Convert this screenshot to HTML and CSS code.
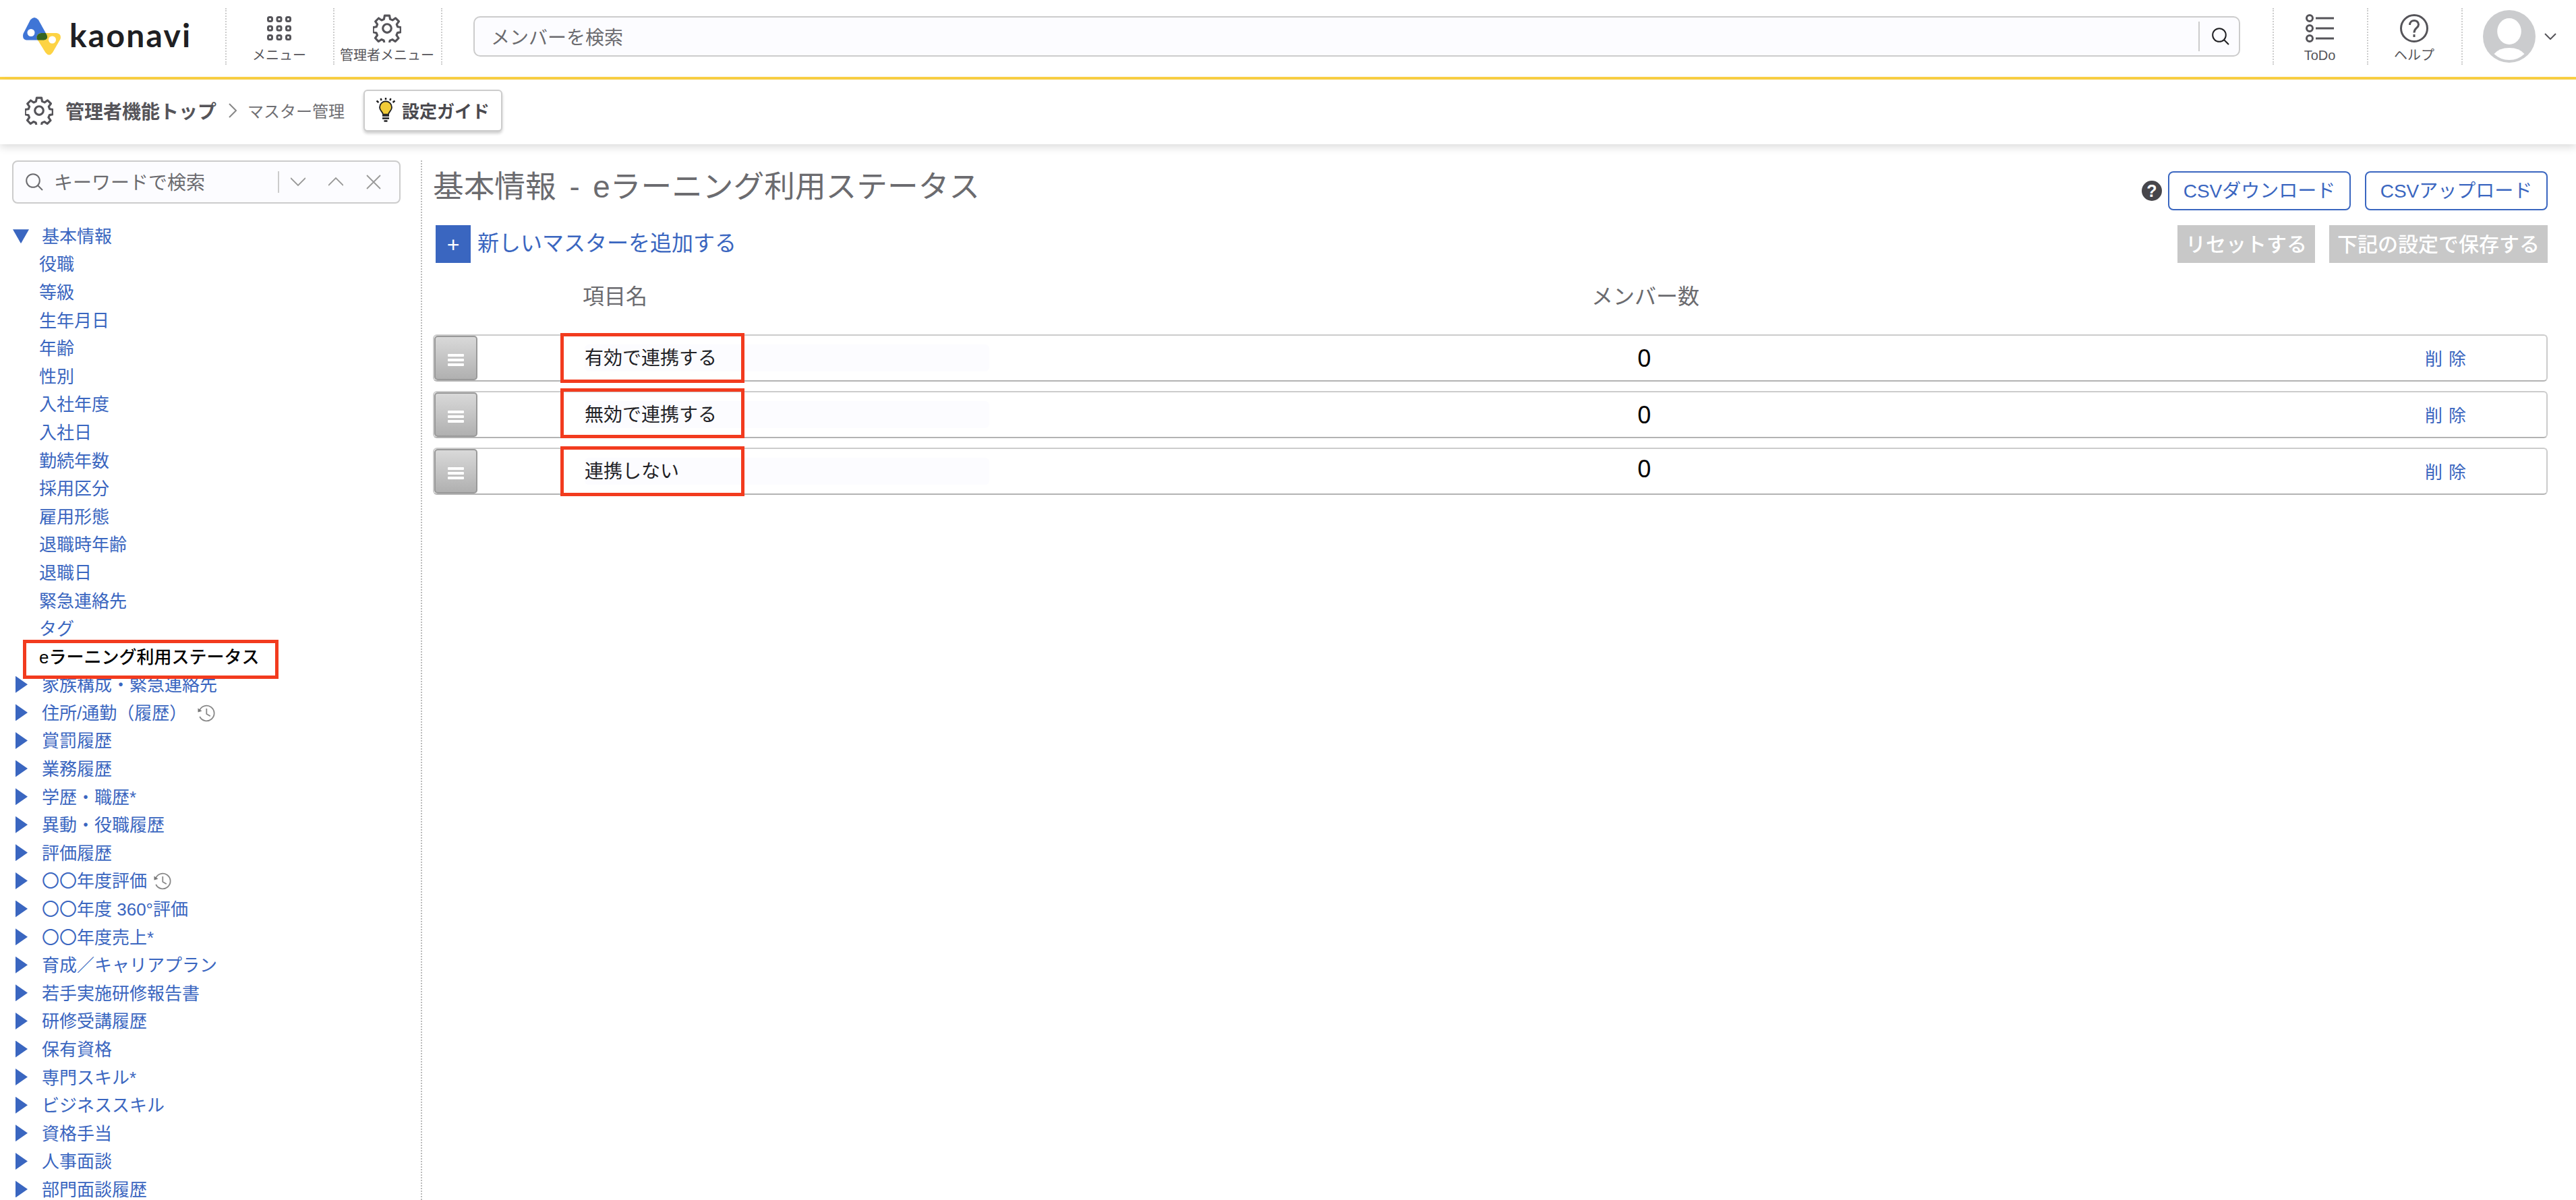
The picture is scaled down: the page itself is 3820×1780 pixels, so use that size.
FILE: index.html
```html
<!DOCTYPE html>
<html lang="ja">
<head>
    <meta charset="UTF-8">
    <title>マスター管理 - kaonavi</title>
    <link rel="stylesheet" href="styles.css">
</head>
<body>
    <svg class="icon-defs">
        <symbol id="gear" viewBox="0 0 40 40">
            <path d="M16.6 2h6.8l.9 5 3.400 1.500 4.300-3 4.600 4.700-3 4.200 1.300 3.400 4.400.8v6.800l-4.600.9-1.400 3.400 2.900 4.300-4.700 4.600-4-2.800-3.500 1.500-.9 4.700h-6.800l-.9-4.900-3.300-1.400-4.100 2.900-4.700-4.800 2.900-4-1.400-3.400-4.600-.9v-6.800l4.700-.8 1.400-3.400-2.800-4.100 4.600-4.700 4.200 2.900 3.300-1.400z" fill="none" stroke="currentColor" stroke-width="3" stroke-linejoin="round"/>
            <circle cx="20" cy="20" r="6" fill="none" stroke="currentColor" stroke-width="3"/>
        </symbol>
        <symbol id="search" viewBox="0 0 26 26">
            <circle cx="11" cy="11" r="9.800" fill="none" stroke="currentColor" stroke-width="2"/>
            <path d="M18 18l7 7" stroke="currentColor" stroke-width="2"/>
        </symbol>
        <symbol id="history" viewBox="0 0 26 26">
            <path d="M3 8.500A11.300 11.300 0 1 1 3.200 18M13.300 6v8l5.500 3.300" fill="none" stroke="#888" stroke-width="1.800"/>
            <path d="M0.500 5.500v6l6-1.700z" fill="#777"/>
        </symbol>
    </svg>

    <header class="header">
        <a class="logo" href="#">
            <svg width="56" height="56" viewBox="0 0 56 56">
                <path d="M11 3.500Q17-3.500 23 3.500L35.500 26Q38 33 31 33.500H5Q-1.500 32 .5 24z" fill="#3f75d6"/>
                <path d="M27 23H50Q57.500 24 55.500 32L44 52Q39 59 33.500 52L20.500 31Q20 24 27 23z" fill="#fdd344"/>
                <path d="M27 23h6.800l1.700 3Q38 33 31 33.500h-9.200L20.500 31Q20 24 27 23z" fill="#35651f"/>
                <circle cx="12" cy="22.500" r="5.500" fill="#fff"/>
                <circle cx="43.500" cy="33" r="5.500" fill="#fff"/>
            </svg>
            <span class="logo-text">kaonavi</span>
        </a>
        <a class="nav-item" href="#">
            <svg width="42" height="42" viewBox="0 0 42 42" fill="none" stroke="#555459" stroke-width="3">
                <rect x="4.500" y="4.500" width="6" height="6" rx="2"/><rect x="18" y="4.500" width="6" height="6" rx="2"/><rect x="31.500" y="4.500" width="6" height="6" rx="2"/>
                <rect x="4.500" y="18" width="6" height="6" rx="2"/><rect x="18" y="18" width="6" height="6" rx="2"/><rect x="31.500" y="18" width="6" height="6" rx="2"/>
                <rect x="4.500" y="31.500" width="6" height="6" rx="2"/><rect x="18" y="31.500" width="6" height="6" rx="2"/><rect x="31.500" y="31.500" width="6" height="6" rx="2"/>
            </svg>
            <span>メニュー</span>
        </a>
        <a class="nav-item nav-admin" href="#">
            <svg width="42" height="42"><use href="#gear"/></svg>
            <span>管理者メニュー</span>
        </a>
        <div class="member-search">
            <span>メンバーを検索</span>
            <button class="search-btn"><svg width="26" height="26"><use href="#search"/></svg></button>
        </div>
        <a class="nav-item nav-right" href="#">
            <svg width="42" height="42" viewBox="0 0 42 42" fill="none" stroke="#555459" stroke-width="3">
                <circle cx="6" cy="6" r="4.500"/><circle cx="6" cy="21" r="4.500"/><circle cx="6" cy="36" r="4.500"/>
                <path d="M15 6h27M15 21h27M15 36h27"/>
            </svg>
            <span>ToDo</span>
        </a>
        <a class="nav-item nav-right" href="#">
            <svg width="42" height="42" viewBox="0 0 42 42" fill="none" stroke="#555459" stroke-width="3">
                <circle cx="21" cy="21" r="19.500"/>
                <path d="M14.500 16C14.500 7.500 27.500 7.500 27.500 15.500C27.500 21 21 20 21 27.500M21 30v4"/>
            </svg>
            <span>ヘルプ</span>
        </a>
        <div class="account">
            <svg width="78" height="78" viewBox="0 0 78 78">
                <circle cx="39" cy="39" r="39" fill="#cbccce"/>
                <ellipse cx="39" cy="31.500" rx="17.800" ry="19.500" fill="#fff"/>
                <path d="M16.500 65Q24 56 39 56T61.500 65Q52 74 39 74T16.500 65z" fill="#fff"/>
            </svg>
            <svg width="18" height="10" viewBox="0 0 18 10" fill="none" stroke="#555459" stroke-width="2"><path d="M1 1l8 8 8-8"/></svg>
        </div>
    </header>

    <nav class="breadcrumb">
        <svg width="42" height="42"><use href="#gear"/></svg>
        <a class="breadcrumb-top" href="#">管理者機能トップ</a>
        <svg width="12" height="22" viewBox="0 0 12 22" fill="none" stroke="#888" stroke-width="2"><path d="M1 1l10 10L1 21"/></svg>
        <span class="breadcrumb-current">マスター管理</span>
        <button class="guide-btn">
            <svg width="30" height="36" viewBox="0 0 30 36">
                <path d="M10.500 24C10 19 5 18.500 5 12.500a10 10 0 0 1 20 0C25 18.500 20 19 19.500 24z" fill="#f2cc38" stroke="#1d1d1f" stroke-width="2" transform="translate(1.500 3) scale(.9)"/>
                <path d="M10 26.500h10M10 30.500h10M12.500 34.500h5M15 0v3M7.500 1l1.200 3M22.500 1l-1.200 3M1.500 4.500l3 2.500M28.500 4.500l-3 2.500" stroke="#1d1d1f" stroke-width="2.400"/>
            </svg>
            設定ガイド
        </button>
    </nav>

    <div class="content">
        <aside class="sidebar">
            <div class="keyword-search">
                <svg width="26" height="26"><use href="#search"/></svg>
                <span class="keyword-text">キーワードで検索</span>
                <span class="keyword-controls">
                    <svg width="22" height="22" viewBox="0 0 22 22"><path d="M0 5l11 11L22 5"/></svg>
                    <svg width="22" height="22" viewBox="0 0 22 22"><path d="M0 16L11 5l11 11"/></svg>
                    <svg width="22" height="22" viewBox="0 0 22 22"><path d="M1 1l20 20M21 1L1 21"/></svg>
                </span>
            </div>
            <ul class="tree">
                <li class="group open">基本情報</li>
                <li class="child">役職</li>
                <li class="child">等級</li>
                <li class="child">生年月日</li>
                <li class="child">年齢</li>
                <li class="child">性別</li>
                <li class="child">入社年度</li>
                <li class="child">入社日</li>
                <li class="child">勤続年数</li>
                <li class="child">採用区分</li>
                <li class="child">雇用形態</li>
                <li class="child">退職時年齢</li>
                <li class="child">退職日</li>
                <li class="child">緊急連絡先</li>
                <li class="child">タグ</li>
                <li class="child current">eラーニング利用ステータス</li>
                <li class="group">家族構成・緊急連絡先</li>
                <li class="group">住所/通勤（履歴）<svg class="history history-wide" width="26" height="26"><use href="#history"/></svg></li>
                <li class="group">賞罰履歴</li>
                <li class="group">業務履歴</li>
                <li class="group">学歴・職歴*</li>
                <li class="group">異動・役職履歴</li>
                <li class="group">評価履歴</li>
                <li class="group">〇〇年度評価<svg class="history" width="26" height="26"><use href="#history"/></svg></li>
                <li class="group">〇〇年度 360°評価</li>
                <li class="group">〇〇年度売上*</li>
                <li class="group">育成／キャリアプラン</li>
                <li class="group">若手実施研修報告書</li>
                <li class="group">研修受講履歴</li>
                <li class="group">保有資格</li>
                <li class="group">専門スキル*</li>
                <li class="group">ビジネススキル</li>
                <li class="group">資格手当</li>
                <li class="group">人事面談</li>
                <li class="group">部門面談履歴</li>
            </ul>
        </aside>

        <main class="main">
            <div class="title-row">
                <h1>基本情報 - eラーニング利用ステータス</h1>
                <div class="csv-buttons">
                    <span class="help-badge">?</span>
                    <button class="csv-btn">CSVダウンロード</button>
                    <button class="csv-btn">CSVアップロード</button>
                </div>
            </div>
            <div class="action-row">
                <a class="add-link" href="#"><span class="plus">+</span>新しいマスターを追加する</a>
                <div class="save-buttons">
                    <button class="disabled-btn">リセットする</button>
                    <button class="disabled-btn">下記の設定で保存する</button>
                </div>
            </div>
            <div class="list-head">
                <span class="head-name">項目名</span>
                <span class="head-count">メンバー数</span>
            </div>
            <div class="item">
                <span class="handle"><i></i><i></i><i></i></span>
                <span class="item-name">有効で連携する</span>
                <span class="item-count">0</span>
                <a class="item-delete" href="#">削除</a>
            </div>
            <div class="item item-second">
                <span class="handle"><i></i><i></i><i></i></span>
                <span class="item-name">無効で連携する</span>
                <span class="item-count">0</span>
                <a class="item-delete" href="#">削除</a>
            </div>
            <div class="item item-third">
                <span class="handle"><i></i><i></i><i></i></span>
                <span class="item-name">連携しない</span>
                <span class="item-count">0</span>
                <a class="item-delete" href="#">削除</a>
            </div>
        </main>
    </div>
</body>
</html>
```
FILE: styles.css
```css
*,
*::before,
*::after {
    box-sizing: border-box;
}

body {
    margin: 0;
    height: 1780px;
    overflow: hidden;
    background-color: #fff;
    color: #555459;
    font-family: "Liberation Sans", "Noto Sans CJK JP", sans-serif;
    font-size: 26px;
}

a {
    color: inherit;
    text-decoration: none;
}

button {
    font-family: inherit;
    white-space: nowrap;
    cursor: pointer;
}

svg {
    display: block;
    flex-shrink: 0;
}

.icon-defs {
    display: none;
}

/* header */
.header {
    display: flex;
    height: 118px;
    padding-top: 12px;
    border-bottom: 4px solid #fdd344;
}

.logo {
    display: flex;
    width: 334px;
    padding: 14px 0 0 34px;
    gap: 13px;
}

.logo-text {
    color: #1f1f23;
    font-family: "Lato", sans-serif;
    font-size: 48px;
    font-weight: bold;
    letter-spacing: 2.200px;
    line-height: 51px;
}

.nav-item {
    display: flex;
    flex-direction: column;
    align-items: center;
    width: 160px;
    height: 84px;
    padding: 9px 2px 0 0;
    border-left: 2px dotted #ccc;
    font-size: 20px;
    line-height: 39px;
    white-space: nowrap;
}

.nav-admin {
    width: 162px;
    border-right: 2px dotted #ccc;
}

.nav-right {
    width: 140px;
}

.member-search {
    display: flex;
    align-items: center;
    justify-content: space-between;
    width: 2620px;
    height: 60px;
    margin: 12px 48px 0 46px;
    padding-left: 24px;
    border: 2px solid #ccc;
    border-radius: 10px;
    background-color: #fcfcff;
    color: #6b6b6f;
    font-size: 28px;
}

.search-btn {
    width: 60px;
    height: 44px;
    padding: 0 0 0 18px;
    border: none;
    border-left: 2px solid #ccc;
    background: none;
    color: #1f1f23;
}

.account {
    display: flex;
    align-items: center;
    height: 84px;
    padding-left: 30px;
    border-left: 2px dotted #ccc;
    gap: 13px;
}

/* breadcrumb */
.breadcrumb {
    display: flex;
    align-items: center;
    height: 96px;
    padding: 0 0 4px 37px;
    box-shadow: 0 4px 12px rgba(0, 0, 0, 0.15);
}

.breadcrumb-top {
    margin: 0 18px;
    font-size: 28px;
    font-weight: bold;
}

.breadcrumb-current {
    margin: 0 28px 2px 16px;
    color: #6f6f73;
    font-size: 24px;
}

.guide-btn {
    display: flex;
    align-items: center;
    width: 206px;
    height: 62px;
    padding: 0 0 2px 16px;
    border: 2px solid #ccc;
    border-radius: 6px;
    background-color: #fff;
    box-shadow: 0 3px 4px rgba(0, 0, 0, 0.2);
    color: #4a494e;
    font-size: 26px;
    font-weight: bold;
    gap: 9px;
}

.content {
    display: flex;
    padding-top: 24px;
}

/* sidebar */
.sidebar {
    width: 626px;
    height: 1542px;
    padding-left: 18px;
    border-right: 2px dotted #bbb;
}

.keyword-search {
    display: flex;
    align-items: center;
    width: 576px;
    height: 64px;
    padding-left: 18px;
    border: 2px solid #ccc;
    border-radius: 8px;
    background-color: #fcfcff;
    color: #6b6b6f;
    font-size: 28px;
}

.keyword-text {
    width: 332px;
    margin: 0 0 2px 16px;
}

.keyword-controls {
    display: flex;
    align-items: center;
    height: 32px;
    padding-left: 17px;
    border-left: 2px solid #ccc;
    fill: none;
    stroke: #999;
    stroke-width: 1.800;
    gap: 34px;
}

.tree {
    margin: 0;
    padding: 27px 0 0;
    color: #3a66c0;
    line-height: 38px;
    list-style: none;
}

.tree li {
    display: flex;
    align-items: center;
    height: 41.600px;
    padding-top: 2px;
    white-space: pre;
}

.group::before {
    content: "";
    width: 18px;
    height: 25px;
    margin: 0 21px 2px 5px;
    background-color: #3a66c0;
    clip-path: polygon(0 0, 100% 50%, 0 100%);
}

.group.open::before {
    width: 24px;
    height: 21px;
    margin: 0 19px 0 1px;
    clip-path: polygon(0 0, 100% 0, 50% 100%);
}

.child {
    padding-left: 40px;
}

.history {
    margin-left: 10px;
}

.history-wide {
    margin-left: 16px;
}

.current {
    position: relative;
    color: #000;
    font-weight: 500;
}

.current::after {
    content: "";
    position: absolute;
    top: -4px;
    left: 16px;
    width: 379px;
    height: 58px;
    border: 5px solid #f23b1e;
}

/* main */
.main {
    width: 3136px;
    margin-left: 16px;
}

.title-row,
.action-row {
    display: flex;
    justify-content: space-between;
}

.title-row {
    height: 96px;
}

h1 {
    margin: 0;
    color: #6b6b6f;
    font-size: 45.700px;
    font-weight: normal;
    line-height: 79px;
    word-spacing: 7px;
}

.csv-buttons {
    display: flex;
    align-items: center;
    height: 58px;
    margin-top: 16px;
}

.help-badge {
    width: 30px;
    height: 30px;
    margin-right: 9px;
    border-radius: 50%;
    background-color: #47464b;
    color: #fff;
    font-size: 25px;
    font-weight: bold;
    line-height: 30px;
    text-align: center;
}

.csv-btn {
    width: 271px;
    height: 58px;
    padding: 0 0 4px;
    border: 2px solid #3a66c0;
    border-radius: 8px;
    background-color: #fff;
    color: #3a66c0;
    font-size: 28px;
}

.csv-btn + .csv-btn {
    margin-left: 21px;
}

.add-link {
    display: flex;
    height: 56px;
    margin-left: 4px;
    color: #3a66c0;
    font-size: 32px;
    line-height: 54px;
    gap: 10px;
}

.plus {
    width: 52px;
    height: 56px;
    background-color: #3a66c0;
    color: #fff;
    line-height: 58px;
    text-align: center;
}

.save-buttons {
    display: flex;
    gap: 21px;
}

.disabled-btn {
    height: 56px;
    padding: 0 12px 5px;
    border: none;
    background-color: #c8c8c8;
    color: #fff;
    font-size: 30px;
    font-weight: 500;
}

.list-head {
    display: flex;
    height: 106px;
    padding-left: 222px;
    color: #6b6b6f;
    font-size: 32px;
    line-height: 100px;
}

.head-name {
    width: 1496px;
}

.item {
    display: flex;
    align-items: center;
    position: relative;
    height: 70px;
    margin-bottom: 14px;
    border: 2px solid #ccc;
    border-bottom-color: #b3b3b3;
    border-radius: 6px;
}

.handle {
    display: flex;
    flex-direction: column;
    align-items: center;
    justify-content: center;
    width: 64px;
    height: 66px;
    padding-top: 6px;
    border: 2px solid #999;
    border-radius: 5px;
    background: linear-gradient(#d9d9d9, #b0b0b0);
    gap: 3px;
}

.handle i {
    width: 24px;
    height: 4px;
    border-radius: 1px;
    background-color: #fff;
}

.item-name {
    width: 600px;
    height: 40px;
    margin: 0 961px 0 159px;
    border-radius: 6px;
    background-color: #fcfcff;
    color: #222226;
    font-size: 28px;
    line-height: 41px;
}

.item-count {
    width: 1168px;
    color: #000;
    font-family: "Noto Sans", sans-serif;
    font-size: 36px;
    line-height: 60px;
}

.item-delete {
    padding-bottom: 2px;
    color: #3a66c0;
    font-size: 26px;
    letter-spacing: 9px;
}

/* red frame over each item name */
.item::after {
    content: "";
    position: absolute;
    top: -4px;
    left: 187px;
    width: 273px;
    height: 74px;
    border: 5px solid #f23b1e;
}

.item-second::after {
    top: -6px;
}

.item-third .item-count {
    padding-bottom: 9px;
}
```
